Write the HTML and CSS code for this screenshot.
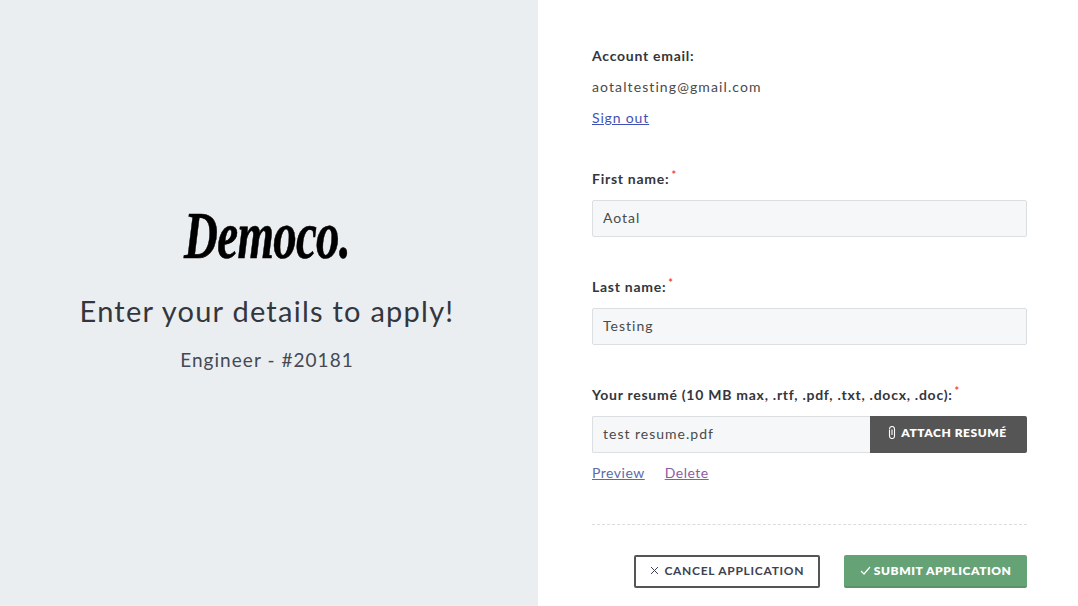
FILE: index.html
```html
<!DOCTYPE html>
<html lang="en">
<head>
    <meta charset="UTF-8">
    <title>Apply - Democo</title>
    <link rel="stylesheet" href="styles.css">
</head>
<body>
    <div class="page">
        <div class="intro">
            <div class="logo">Democo.</div>
            <h1>Enter your details to apply!</h1>
            <p class="job">Engineer - #20181</p>
        </div>

        <form class="apply-form">
            <div class="account">
                <div class="line label">Account email:</div>
                <div class="line email">aotaltesting@gmail.com</div>
                <div class="line"><a href="#" class="link-blue">Sign out</a></div>
            </div>

            <div class="field">
                <label class="label">First name:<span class="req">*</span></label>
                <input class="text-input" type="text" value="Aotal">
            </div>

            <div class="field">
                <label class="label">Last name:<span class="req">*</span></label>
                <input class="text-input" type="text" value="Testing">
            </div>

            <div class="field resume">
                <label class="label">Your resumé (10 MB max, .rtf, .pdf, .txt, .docx, .doc):<span class="req">*</span></label>
                <div class="file-row">
                    <div class="file-name">test resume.pdf</div>
                    <button type="button" class="btn-attach">
                        <svg class="clip" width="8" height="13" viewBox="0 0 8 13" fill="none" stroke="#fff" stroke-width="1.1"><path d="M4 3.5v5.5M1.5 3.5v6.5a2.5 2.5 0 0 0 5 0V3a2.5 2.5 0 0 0-5 0"/></svg>
                        ATTACH RESUMÉ
                    </button>
                </div>
                <div class="file-links">
                    <a href="#" class="link-blue">Preview</a>
                    <a href="#" class="link-purple">Delete</a>
                </div>
            </div>

            <div class="actions">
                <button type="button" class="btn-cancel">
                    <svg class="x-icon" width="9" height="9" viewBox="0 0 9 9" fill="none" stroke="#3d4250" stroke-width="1"><path d="M1 1l7 7M8 1L1 8"/></svg>
                    CANCEL APPLICATION
                </button>
                <button type="button" class="btn-submit">
                    <svg width="11" height="9" viewBox="0 0 11 9" fill="none" stroke="#fff" stroke-width="1.2"><path d="M1 5l3 3 6-7"/></svg>
                    SUBMIT APPLICATION
                </button>
            </div>
        </form>
    </div>
</body>
</html>
```

FILE: styles.css
```css
html, body {
    margin: 0;
    height: 100%;
    overflow: hidden;
}

body {
    font-family: 'Lato', 'Open Sans', sans-serif;
    color: #3a3a3a;
    background-color: #fff;
}

.page {
    display: flex;
    height: 606px;
}

.intro {
    width: 538px;
    flex-shrink: 0;
    box-sizing: border-box;
    padding: 204px 4px 0 0;
    background-color: #ebeef1;
    text-align: center;
}

/* no script font available, so a squeezed bold italic stands in for the logo */
.logo {
    font-family: 'Liberation Serif', serif;
    font-size: 68px;
    font-style: italic;
    font-weight: bold;
    line-height: 62px;
    letter-spacing: -1px;
    color: #000;
    transform: scaleX(0.69);
    -webkit-text-stroke: 0.6px #000;
}

h1 {
    margin: 26px 0 0;
    font-size: 29px;
    font-weight: 400;
    line-height: 38px;
    letter-spacing: 1.25px;
    color: #33373d;
}

.job {
    margin: 17px 0 0;
    font-size: 19px;
    font-weight: 400;
    line-height: 26px;
    letter-spacing: 1.05px;
    color: #444a52;
}

.apply-form {
    width: 435px;
    margin-left: 54px;
    padding-top: 40px;
}

.line {
    height: 31px;
    line-height: 31px;
    font-size: 14px;
    letter-spacing: 0.85px;
}

.label {
    display: block;
    font-size: 14px;
    font-weight: 700;
    letter-spacing: 0.74px;
    color: #33363c;
}

.email {
    color: #4a4a4a;
    letter-spacing: 1.1px;
}

.req {
    position: relative;
    top: -5px;
    margin-left: 2px;
    font-size: 11px;
    color: #f0483e;
}

.account + .field {
    margin-top: 36px;
}

.field .label {
    line-height: 20px;
    margin-bottom: 10px;
}

.field + .field {
    margin-top: 40px;
}

.text-input {
    display: block;
    box-sizing: border-box;
    width: 100%;
    height: 37px;
    padding: 0 10px 2px;
    border: 1px solid #dcdfe2;
    border-radius: 2px;
    background-color: #f6f7f9;
    font-family: inherit;
    font-size: 14px;
    letter-spacing: 1px;
    color: #4a4a4a;
}

.file-row {
    display: flex;
    height: 37px;
}

.file-name {
    flex: 1;
    box-sizing: border-box;
    padding-left: 10px;
    border: 1px solid #dcdfe2;
    border-right: none;
    border-radius: 2px 0 0 2px;
    background-color: #f6f7f9;
    font-size: 14px;
    line-height: 33px;
    letter-spacing: 1px;
    color: #4a4a4a;
}

button {
    font-family: inherit;
    font-weight: 800;
    font-size: 12px;
    letter-spacing: 0.55px;
    cursor: pointer;
}

.btn-attach {
    width: 157px;
    border: none;
    border-radius: 0 2px 2px 0;
    background-color: #555;
    color: #fff;
    padding: 0 2px 4px 0;
}

.clip {
    vertical-align: -2px;
    margin-right: 2px;
}

.file-links {
    display: flex;
    gap: 20px;
    margin-top: 11px;
    font-size: 14px;
    line-height: 18px;
    letter-spacing: 0.5px;
}

.link-blue {
    color: #3f51b5;
}

.file-links .link-blue {
    color: #5c6bab;
}

.link-purple {
    color: #8e5ba6;
}

.actions {
    display: flex;
    justify-content: flex-end;
    gap: 24px;
    margin-top: 42px;
    padding-top: 30px;
    border-top: 1px dashed #dcdcdc;
}

.btn-cancel {
    width: 186px;
    height: 33px;
    border: 2px solid #555;
    border-radius: 2px;
    background-color: #fff;
    color: #3d4250;
    font-weight: 700;
    letter-spacing: 0.72px;
    padding: 0 0 2px;
}

.x-icon {
    margin-right: 2px;
}

.btn-submit {
    width: 183px;
    height: 33px;
    border: none;
    border-bottom: 2px solid #5a9468;
    border-radius: 2px;
    background-color: #65a275;
    color: #fff;
    padding: 0;
}
```
